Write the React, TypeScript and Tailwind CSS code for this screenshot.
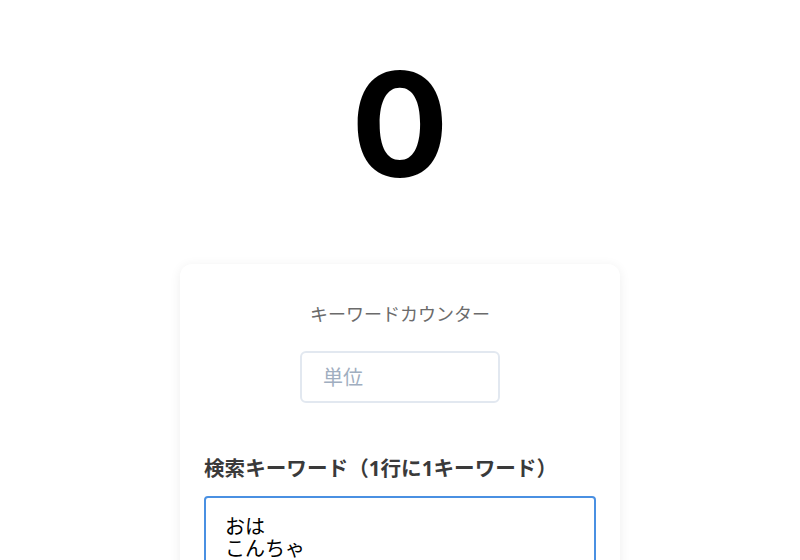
import React from "react";

export default function App() {
  return (
    <div
      className="min-h-[560px] bg-white flex flex-col items-center"
      style={{ fontFamily: '"Noto Sans", "Noto Sans CJK JP", sans-serif' }}
    >
      <div className="h-[264px] w-full flex justify-center">
        <div
          className="mt-[50px] text-[145px] leading-[150px] font-bold text-black"
          style={{ fontFamily: 'Inter, "Noto Sans", sans-serif' }}
        >
          0
        </div>
      </div>
      <div className="w-[440px] bg-white rounded-xl shadow-[0_2px_12px_rgba(0,0,0,0.07)] px-6 pt-[37px] pb-10 flex flex-col">
        <div className="text-center text-[18px] leading-[27px] text-[#6b6b6b]">キーワードカウンター</div>
        <div className="flex justify-center mt-[23px]">
          <input
            placeholder="単位"
            className="w-[200px] h-[52px] border-2 border-[#e2e8f0] rounded-md px-[21px] text-[20px] placeholder:text-[#a0aec0] outline-none"
          />
        </div>
        <div className="mt-[50px] text-[20.6px] leading-[30px] font-bold text-[#3a3a3a]">検索キーワード（1行に1キーワード）</div>
        <textarea
          className="mt-[13px] w-[392px] h-[200px] border-2 border-[#4a90e2] rounded-[4px] px-[19px] pt-[18px] text-[20px] leading-[22px] text-black outline-none resize-none"
          defaultValue={"おは\nこんちゃ"}
        />
      </div>
    </div>
  );
}
